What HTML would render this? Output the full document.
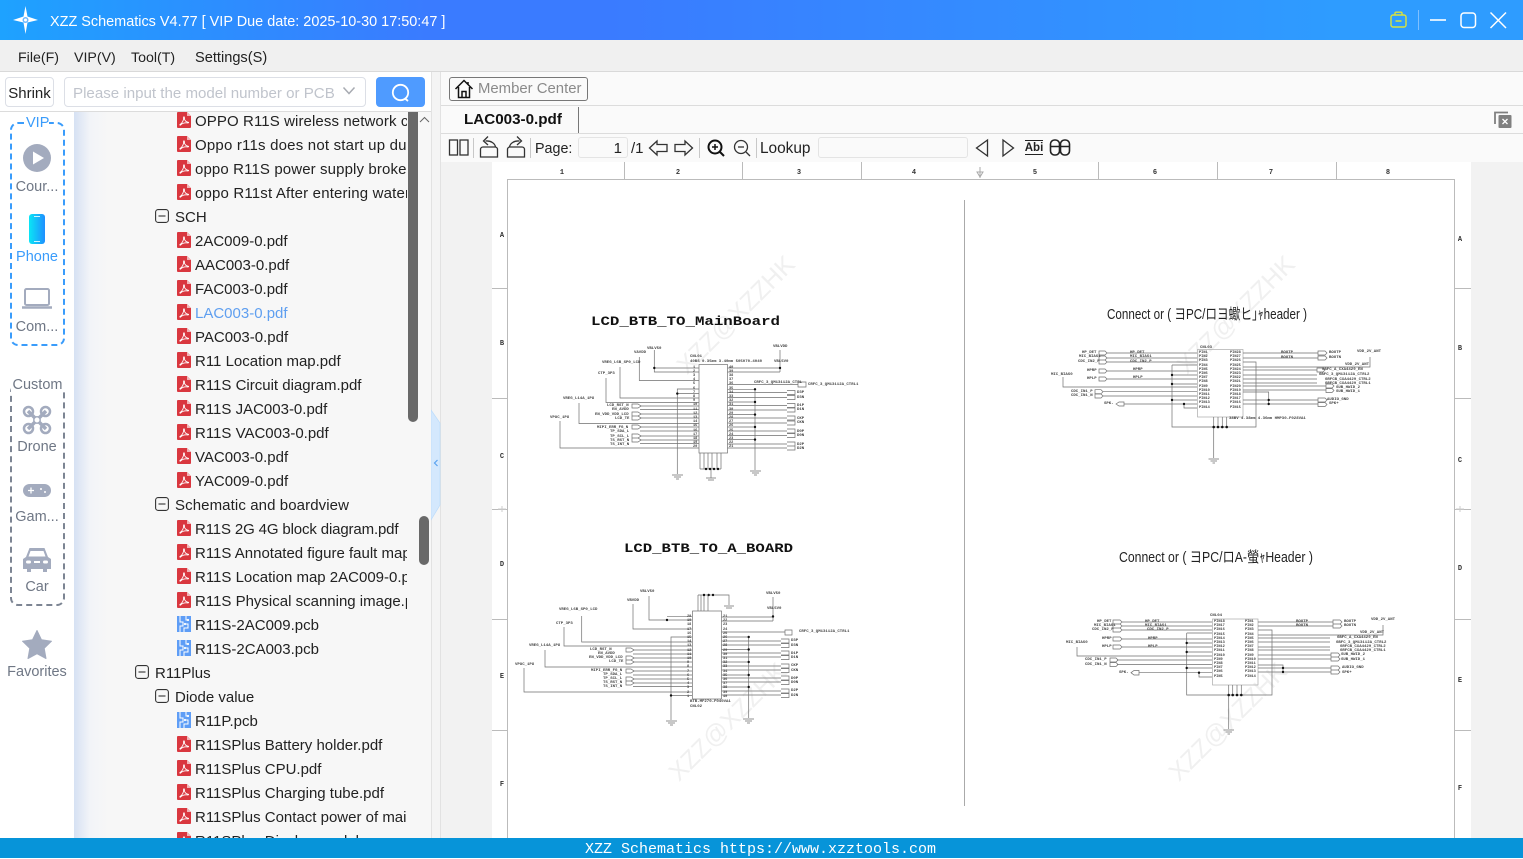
<!DOCTYPE html>
<html><head><meta charset="utf-8"><title>XZZ Schematics</title>
<style>
*{box-sizing:border-box}
html,body{margin:0;padding:0;width:1523px;height:858px;overflow:hidden;background:#fff;font-family:"Liberation Sans","Noto Sans CJK SC",sans-serif;color:#222}
.a{position:absolute;white-space:nowrap}
#tree{position:absolute;left:74px;top:112px;width:333px;height:726px;overflow:hidden}
.r{position:absolute;font-size:15px;line-height:28px;height:24px;white-space:nowrap;color:#222}
.r svg{position:absolute}
.f{left:121px}
.t{left:101px}
.l{left:81px}
.side{position:absolute;left:0;width:74px;text-align:center;font-size:14.5px;color:#6f7785;line-height:20px}
.pn{position:absolute;font:bold 3.6px/4.2px "Liberation Mono",monospace;color:#444;white-space:pre}
.sl{position:absolute;font:bold 4px/4px "Liberation Mono",monospace;color:#444;white-space:nowrap}
.wm{position:absolute;font:25px/28px "Liberation Sans",sans-serif;color:#f0f0f0;transform:translate(-50%,-50%) rotate(-45deg);white-space:nowrap}
</style></head><body>
<svg width="0" height="0" style="position:absolute"><defs>
<symbol id="pdf" viewBox="0 0 14 16"><path d="M1 0H10L14 4V15a1 1 0 0 1-1 1H1a1 1 0 0 1-1-1V1a1 1 0 0 1 1-1z" fill="#d9373f"/><path d="M10 0L14 4H10z" fill="#f2b5b8"/><path d="M3 12.5C5 11.5 7 8 6.6 5.5 6.4 4.5 7.6 4.5 7.4 6 7.2 8 9 10 11 10.2 12 10.3 11.6 11 10.6 10.9 8.5 10.6 5.5 11 3.6 13 3 13.4 2.6 13 3 12.5z" fill="none" stroke="#fff" stroke-width=".9"/></symbol>
<symbol id="pcb" viewBox="0 0 14 16"><rect width="14" height="16" fill="#5e9df6"/><path d="M3 0V6H6V10H3V16M9 0V4H11M7 16V12H11V8H8" fill="none" stroke="#fff" stroke-width="1"/><circle cx="11" cy="4" r="1.1" fill="#fff"/><circle cx="8" cy="8" r="1.1" fill="#fff"/></symbol>
<symbol id="box" viewBox="0 0 14 14"><rect x=".6" y=".6" width="12.8" height="12.8" rx="2.5" fill="none" stroke="#333" stroke-width="1.1"/><path d="M3.5 7H10.5" stroke="#333" stroke-width="1.1"/></symbol>
</defs></svg>

<!-- title bar -->
<div class="a" style="left:0;top:0;width:1523px;height:40px;background:linear-gradient(90deg,#1ea2ff 0,#3a7bff 28%,#3a7bff 40%,#2e9cff 88%,#2e9cff 100%)"></div>
<svg class="a" style="left:12px;top:6px" width="27" height="28" viewBox="0 0 27 28"><path d="M13.5 0L15.5 10.5 26 14 15.5 16.5 13.5 28 11.5 16.5 1 14 11.5 10.5z" fill="#fff"/><circle cx="13.5" cy="14" r="3" fill="#6db8ff"/><circle cx="13.5" cy="14" r="1.5" fill="#fff"/></svg>
<div class="a" style="left:50px;top:12px;font-size:14.45px;line-height:20px;color:#fff">XZZ Schematics V4.77 [ VIP Due date: 2025-10-30 17:50:47 ]</div>
<svg class="a" style="left:1388px;top:10px" width="125" height="22" viewBox="0 0 125 22"><g fill="none" stroke="#d9e33c" stroke-width="1.4"><rect x="3" y="5" width="15" height="12" rx="2"/><path d="M7 5V3.2a1 1 0 0 1 1-1H13a1 1 0 0 1 1 1V5M7.5 11H13.5"/></g><path d="M30.5 0V20" stroke="#7fc0ff"/><path d="M42 10H58" stroke="#fff" stroke-width="1.6"/><rect x="73" y="3" width="14.5" height="14.5" rx="3" fill="none" stroke="#fff" stroke-width="1.5"/><path d="M102.500 2.500L118 18M118 2.500L102.500 18" stroke="#fff" stroke-width="1.5"/></svg>

<!-- menu -->
<div class="a" style="left:0;top:40px;width:1523px;height:32px;background:#f0f0f0;border-bottom:1px solid #d9d9d9"></div>
<div class="a" style="left:18px;top:48px;font-size:14.2px;line-height:20px">File(F)</div>
<div class="a" style="left:74px;top:48px;font-size:14.2px;line-height:20px">VIP(V)</div>
<div class="a" style="left:131px;top:48px;font-size:14.2px;line-height:20px">Tool(T)</div>
<div class="a" style="left:195px;top:48px;font-size:14.6px;line-height:20px">Settings(S)</div>

<!-- left toolbar -->
<div class="a" style="left:0;top:72px;width:431px;height:40px;background:#fff;border-bottom:1px solid #dcdcdc"></div>
<div class="a" style="left:5px;top:77px;width:49px;height:30px;border:1px solid #dcdfe6;border-radius:4px;font-size:15px;line-height:31px;text-align:center;color:#222">Shrink</div>
<div class="a" style="left:64px;top:77px;width:302px;height:30px;border:1px solid #dcdfe6;border-radius:4px;font-size:15.1px;line-height:31px;color:#c0c4cc;padding-left:8px;background:#fff">Please input the model number or PCB</div>
<svg class="a" style="left:342px;top:86px" width="14" height="10"><path d="M1.500 1.500L7 7.500 12.500 1.500" fill="none" stroke="#a8abb2" stroke-width="1.5"/></svg>
<div class="a" style="left:376px;top:77px;width:49px;height:30px;border-radius:4px;background:#4f9bff"></div>
<svg class="a" style="left:390px;top:82px" width="22" height="21"><circle cx="10.500" cy="10.500" r="7.700" fill="none" stroke="#fff" stroke-width="1.800"/><path d="M15 16.500L18 19" stroke="#fff" stroke-width="1.800"/></svg>

<!-- sidebar -->
<div class="a" style="left:0;top:112px;width:74px;height:726px;background:#fff"></div>
<div class="a" style="left:10px;top:122px;width:55px;height:224px;border:2px dashed #3a9cfb;border-radius:8px"></div>
<div class="side" style="top:113px;left:26px;width:23px;background:#fff;color:#3a9cfb;font-size:14.5px;height:18px">VIP</div>
<svg class="a" style="left:23px;top:144px" width="28" height="28"><circle cx="14" cy="14" r="14" fill="#a3abbe"/><path d="M10 7.500L21 14 10 20.500z" fill="#fff"/></svg>
<div class="side" style="top:177px">Cour...</div>
<svg class="a" style="left:28px;top:214px" width="18" height="31"><defs><linearGradient id="ph" x1="0" x2="1"><stop offset="0" stop-color="#0ae6f5"/><stop offset="1" stop-color="#1f8fff"/></linearGradient></defs><rect x="1" y="0" width="16" height="30" rx="3" fill="url(#ph)"/><path d="M6 2.500H12M6 27.500H12" stroke="#cdf6ff" stroke-width="1"/></svg>
<div class="side" style="top:247px;color:#3a9cfb">Phone</div>
<svg class="a" style="left:22px;top:288px" width="30" height="22"><rect x="3" y="1" width="24" height="16" rx="1.500" fill="none" stroke="#a3abbe" stroke-width="2"/><path d="M0 19.500H30" stroke="#a3abbe" stroke-width="2.500"/></svg>
<div class="side" style="top:317px">Com...</div>

<div class="a" style="left:10px;top:384px;width:55px;height:222px;border:2px dashed #7d8593;border-radius:8px"></div>
<div class="side" style="top:375px;left:11px;width:53px;background:#fff;height:17px">Custom</div>
<svg class="a" style="left:22px;top:405px" width="30" height="30" viewBox="0 0 30 30"><g fill="none" stroke="#a3abbe"><path d="M6 6L24 24M24 6L6 24" stroke-width="3.500"/><circle cx="6.500" cy="6.500" r="4.500" stroke-width="2.500"/><circle cx="23.500" cy="6.500" r="4.500" stroke-width="2.500"/><circle cx="6.500" cy="23.500" r="4.500" stroke-width="2.500"/><circle cx="23.500" cy="23.500" r="4.500" stroke-width="2.500"/></g><circle cx="15" cy="15" r="3.200" fill="#fff" stroke="#a3abbe" stroke-width="1.500"/></svg>
<div class="side" style="top:437px">Drone</div>
<svg class="a" style="left:22px;top:483px" width="30" height="15"><rect x="1" y="1" width="28" height="13" rx="6.500" fill="#a3abbe"/><path d="M6 7.500H12M9 4.500V10.500" stroke="#fff" stroke-width="1.300"/><circle cx="19" cy="6" r="1" fill="#fff"/><circle cx="23" cy="9" r="1" fill="#fff"/></svg>
<div class="side" style="top:507px">Gam...</div>
<svg class="a" style="left:22px;top:547px" width="30" height="26" viewBox="0 0 30 26"><path d="M7.500 1H22.500L26 10 29 12V22H25V25H21V22H9V25H5V22H1V12L4 10z" fill="#a3abbe"/><path d="M8.500 4H21.500L23.500 9.500H6.500z" fill="#fff"/><rect x="4" y="13.500" width="5" height="3" rx="1.500" fill="#fff"/><rect x="21" y="13.500" width="5" height="3" rx="1.500" fill="#fff"/><rect x="12" y="14" width="6" height="2" fill="#fff"/></svg>
<div class="side" style="top:577px">Car</div>
<svg class="a" style="left:22px;top:630px" width="30" height="29" viewBox="0 0 30 29"><path d="M15 .5L19.500 9.800 29.500 11.200 22.200 18.300 24 28.500 15 23.700 6 28.500 7.800 18.300 .5 11.200 10.500 9.800z" fill="#a3abbe" stroke="#a3abbe" stroke-linejoin="round"/></svg>
<div class="side" style="top:662px">Favorites</div>

<!-- tree background -->
<div class="a" style="left:74px;top:112px;width:358px;height:726px;background:linear-gradient(90deg,#d6e1f3 0,#f2f4f8 16px,#f7f7f7 34px,#f7f7f7 100%)"></div>
<div id="tree">
<div class="r f" style="top:-4px;letter-spacing:.1px"><svg style="left:-18px;top:4px" width="14" height="16"><use href="#pdf"/></svg>OPPO R11S wireless network card</div>
<div class="r f" style="top:20px;letter-spacing:.2px"><svg style="left:-18px;top:4px" width="14" height="16"><use href="#pdf"/></svg>Oppo r11s does not start up due</div>
<div class="r f" style="top:44px;letter-spacing:.12px"><svg style="left:-18px;top:4px" width="14" height="16"><use href="#pdf"/></svg>oppo R11S power supply broken</div>
<div class="r f" style="top:68px;letter-spacing:.17px"><svg style="left:-18px;top:4px" width="14" height="16"><use href="#pdf"/></svg>oppo R11st After entering water</div>
<div class="r t" style="top:92px"><svg style="left:-20px;top:5px" width="14" height="14"><use href="#box"/></svg>SCH</div>
<div class="r f" style="top:116px"><svg style="left:-18px;top:4px" width="14" height="16"><use href="#pdf"/></svg>2AC009-0.pdf</div>
<div class="r f" style="top:140px"><svg style="left:-18px;top:4px" width="14" height="16"><use href="#pdf"/></svg>AAC003-0.pdf</div>
<div class="r f" style="top:164px"><svg style="left:-18px;top:4px" width="14" height="16"><use href="#pdf"/></svg>FAC003-0.pdf</div>
<div class="r f" style="top:188px;color:#5f9ff0"><svg style="left:-18px;top:4px" width="14" height="16"><use href="#pdf"/></svg>LAC003-0.pdf</div>
<div class="r f" style="top:212px"><svg style="left:-18px;top:4px" width="14" height="16"><use href="#pdf"/></svg>PAC003-0.pdf</div>
<div class="r f" style="top:236px"><svg style="left:-18px;top:4px" width="14" height="16"><use href="#pdf"/></svg>R11 Location map.pdf</div>
<div class="r f" style="top:260px"><svg style="left:-18px;top:4px" width="14" height="16"><use href="#pdf"/></svg>R11S Circuit diagram.pdf</div>
<div class="r f" style="top:284px"><svg style="left:-18px;top:4px" width="14" height="16"><use href="#pdf"/></svg>R11S JAC003-0.pdf</div>
<div class="r f" style="top:308px"><svg style="left:-18px;top:4px" width="14" height="16"><use href="#pdf"/></svg>R11S VAC003-0.pdf</div>
<div class="r f" style="top:332px"><svg style="left:-18px;top:4px" width="14" height="16"><use href="#pdf"/></svg>VAC003-0.pdf</div>
<div class="r f" style="top:356px"><svg style="left:-18px;top:4px" width="14" height="16"><use href="#pdf"/></svg>YAC009-0.pdf</div>
<div class="r t" style="top:380px;letter-spacing:.1px"><svg style="left:-20px;top:5px" width="14" height="14"><use href="#box"/></svg>Schematic and boardview</div>
<div class="r f" style="top:404px;letter-spacing:-.14px"><svg style="left:-18px;top:4px" width="14" height="16"><use href="#pdf"/></svg>R11S 2G 4G block diagram.pdf</div>
<div class="r f" style="top:428px"><svg style="left:-18px;top:4px" width="14" height="16"><use href="#pdf"/></svg>R11S Annotated figure fault map</div>
<div class="r f" style="top:452px"><svg style="left:-18px;top:4px" width="14" height="16"><use href="#pdf"/></svg>R11S Location map 2AC009-0.pdf</div>
<div class="r f" style="top:476px"><svg style="left:-18px;top:4px" width="14" height="16"><use href="#pdf"/></svg>R11S Physical scanning image.pdf</div>
<div class="r f" style="top:500px"><svg style="left:-18px;top:4px" width="14" height="16"><use href="#pcb"/></svg>R11S-2AC009.pcb</div>
<div class="r f" style="top:524px"><svg style="left:-18px;top:4px" width="14" height="16"><use href="#pcb"/></svg>R11S-2CA003.pcb</div>
<div class="r l" style="top:548px"><svg style="left:-20px;top:5px" width="14" height="14"><use href="#box"/></svg>R11Plus</div>
<div class="r t" style="top:572px"><svg style="left:-20px;top:5px" width="14" height="14"><use href="#box"/></svg>Diode value</div>
<div class="r f" style="top:596px"><svg style="left:-18px;top:4px" width="14" height="16"><use href="#pcb"/></svg>R11P.pcb</div>
<div class="r f" style="top:620px"><svg style="left:-18px;top:4px" width="14" height="16"><use href="#pdf"/></svg>R11SPlus Battery holder.pdf</div>
<div class="r f" style="top:644px"><svg style="left:-18px;top:4px" width="14" height="16"><use href="#pdf"/></svg>R11SPlus CPU.pdf</div>
<div class="r f" style="top:668px"><svg style="left:-18px;top:4px" width="14" height="16"><use href="#pdf"/></svg>R11SPlus Charging tube.pdf</div>
<div class="r f" style="top:692px"><svg style="left:-18px;top:4px" width="14" height="16"><use href="#pdf"/></svg>R11SPlus Contact power of main</div>
<div class="r f" style="top:716px"><svg style="left:-18px;top:4px" width="14" height="16"><use href="#pdf"/></svg>R11SPlus Display module</div>
</div>
<div class="a" style="left:408px;top:112px;width:10px;height:310px;background:#696969;border-radius:0 0 5px 5px"></div>
<svg class="a" style="left:418px;top:115px" width="13" height="10"><path d="M2 7L6.500 2.500 11 7" fill="none" stroke="#666" stroke-width="1"/></svg>
<div class="a" style="left:419px;top:516px;width:10px;height:49px;background:#696969;border-radius:5px"></div>

<!-- splitter -->
<div class="a" style="left:431px;top:72px;width:10px;height:766px;background:#f4f4f4;border-left:1px solid #e2e2e2;border-right:1px solid #e2e2e2"></div>
<svg class="a" style="left:431px;top:408px" width="10" height="114"><path d="M0 2L9 15V97L0 112z" fill="#d4e8fd" stroke="#bcdcfb" stroke-width=".7"/><path d="M6.500 52L3.500 55 6.500 58" fill="none" stroke="#5aa2f0" stroke-width="1.200"/></svg>

<!-- right top bars -->
<div class="a" style="left:441px;top:72px;width:1082px;height:34px;background:#fafafa;border-bottom:1px solid #dcdcdc"></div>
<div class="a" style="left:449px;top:77px;width:139px;height:24px;border:1px solid #777;border-radius:3px;font-size:14.9px;line-height:23px;color:#8a8a8a;padding-left:28px">Member Center</div>
<svg class="a" style="left:454px;top:79px" width="20" height="20" viewBox="0 0 20 20"><path d="M1.500 10L10 1.500 18.500 10M4.500 8V18.500H15.500V8M8 18.500V12.500H12V18.500M14 3V6" fill="none" stroke="#111" stroke-width="1.500"/></svg>
<div class="a" style="left:441px;top:106px;width:1082px;height:28px;background:#fafafa;border-bottom:1px solid #dcdcdc"></div>
<div class="a" style="left:464px;top:110px;font-size:15.2px;font-weight:bold;line-height:20px;color:#111">LAC003-0.pdf</div>
<div class="a" style="left:578px;top:107px;width:1px;height:26px;background:#777"></div>
<svg class="a" style="left:1494px;top:110px" width="19" height="19" viewBox="0 0 19 19"><path d="M1 14V2.500H14" fill="none" stroke="#808080" stroke-width="1.800"/><rect x="4.500" y="5" width="13" height="13" rx="1" fill="#808080"/><path d="M8.500 9L13.500 14M13.500 9L8.500 14" stroke="#fff" stroke-width="1.300"/></svg>

<!-- pdf toolbar -->
<div class="a" style="left:441px;top:134px;width:1082px;height:28px;background:#fafafa"></div>
<svg class="a" style="left:441px;top:134px" width="640" height="28" viewBox="0 0 640 28">
<g fill="none" stroke="#333" stroke-width="1.300">
<rect x="8.500" y="6" width="8" height="15"/><rect x="19" y="6" width="8" height="15"/>
<path d="M39.500 23V15.500a2.500 2.500 0 0 1 2.500-2.500H54a2.500 2.500 0 0 1 2.500 2.500V23H39.500z"/>
<path d="M54.500 13C54 9.500 50 6.500 44.500 7"/><path d="M47 2.500L42.500 7 47 11"/>
<path d="M66.500 23V15.500a2.500 2.500 0 0 1 2.500-2.500H81a2.500 2.500 0 0 1 2.500 2.500V23H66.500z"/>
<path d="M68.500 13C69 9.500 73 6.500 78.500 7"/><path d="M76 2.500L80.500 7 76 11"/>
<path d="M208.500 14L216 7V10.500H226V17.500H216V21z"/>
<path d="M251.500 14L244 7V10.500H234V17.500H244V21z"/>
<path d="M546.500 6L535.500 14 546.500 22z"/>
<path d="M562 6L572.500 14 562 22z"/>
</g>
<g fill="none" stroke="#111" stroke-width="2"><circle cx="274" cy="13" r="6.500"/><path d="M279 18L283 22"/><path d="M271 13H277M274 10V16" stroke-width="1.500"/></g>
<g fill="none" stroke="#333" stroke-width="1.300"><circle cx="300" cy="13" r="6.500"/><path d="M305 18L309 22"/><path d="M297 13H303"/></g>
<g fill="none" stroke="#222" stroke-width="1.600"><rect x="609.500" y="6" width="9" height="15" rx="4"/><rect x="619.500" y="6" width="9" height="15" rx="4"/><path d="M609.500 12.500H628.500"/></g>
<path d="M32.500 4V24M89.500 4V24M258.500 4V24M315.500 4V24" stroke="#c8c8c8"/>
<path d="M584 6.500H602M584 20.500H602" stroke="#222" stroke-width="1"/>
</svg>
<div class="a" style="left:1024px;top:141px;width:20px;font:bold 11.5px/14px 'Liberation Sans',sans-serif;color:#222;text-align:center">Abi</div>
<div class="a" style="left:535px;top:139px;font-size:14.3px;line-height:20px">Page:</div>
<div class="a" style="left:578px;top:137px;width:50px;height:21px;border:1px solid #e4e4e4;border-radius:3px;background:#fafafa;font-size:15px;line-height:21px;text-align:right;padding-right:5px">1</div>
<div class="a" style="left:631px;top:139px;font-size:15px;line-height:20px">/1</div>
<div class="a" style="left:760px;top:139px;font-size:15.4px;line-height:20px">Lookup</div>
<div class="a" style="left:818px;top:137px;width:150px;height:21px;border:1px solid #e4e4e4;border-radius:3px;background:#fafafa"></div>

<!-- canvas -->
<div class="a" style="left:441px;top:162px;width:1082px;height:676px;background:#f2f2f2"></div>
<div class="a" style="left:492px;top:162px;width:979px;height:676px;background:#fff"></div>

<!-- watermarks -->
<div class="wm" style="left:736px;top:315px">XZZ@XZZHK</div>
<div class="wm" style="left:1236px;top:315px">XZZ@XZZHK</div>
<div class="wm" style="left:728px;top:722px">XZZ@XZZHK</div>
<div class="wm" style="left:1228px;top:722px">XZZ@XZZHK</div>

<!-- drawing -->
<svg class="a" style="left:0;top:0" width="1523" height="858" viewBox="0 0 1523 858">
<g fill="none" stroke="#bbb" stroke-width="1">
<path d="M507.500 838V179.500H1454.500V838"/>
<path d="M624.500 162V179M742.500 162V179M861.500 162V179M1098.500 162V179M1217.500 162V179M1336.500 162V179"/>
<path d="M492 288.500H507M492 398.500H507M492 509.500H507M492 619.500H507M492 730.500H507"/>
<path d="M1455 288.500H1471M1455 398.500H1471M1455 509.500H1471M1455 619.500H1471M1455 730.500H1471"/>
<path d="M964.500 200V806" stroke="#aaa"/>
<path d="M980 167V178M977 172H983L980 177z" stroke="#aaa"/>
<path d="M498 509H506M1456 509H1464M502 506V512M1460 506V512" stroke="#ccc"/>
</g>
<g font-family="Liberation Mono,monospace" font-weight="bold" font-size="7" fill="#333" text-anchor="middle">
<text x="562" y="174">1</text><text x="678" y="174">2</text><text x="799" y="174">3</text><text x="914" y="174">4</text><text x="1035" y="174">5</text><text x="1155" y="174">6</text><text x="1271" y="174">7</text><text x="1388" y="174">8</text>
<text x="502" y="237">A</text><text x="502" y="345">B</text><text x="502" y="458">C</text><text x="502" y="566">D</text><text x="502" y="678">E</text><text x="502" y="786">F</text>
<text x="1460" y="241">A</text><text x="1460" y="350">B</text><text x="1460" y="462">C</text><text x="1460" y="570">D</text><text x="1460" y="682">E</text><text x="1460" y="790">F</text>
</g>
<g font-family="Liberation Mono,monospace" font-weight="bold" fill="#111">
<text x="591" y="325" font-size="13" textLength="189" lengthAdjust="spacingAndGlyphs">LCD_BTB_TO_MainBoard</text>
<text x="624" y="552" font-size="13" textLength="169" lengthAdjust="spacingAndGlyphs">LCD_BTB_TO_A_BOARD</text>
</g>
<g font-family="Liberation Sans,Noto Sans CJK SC,sans-serif" fill="#222" font-size="15">
<text x="1107" y="319" textLength="200" lengthAdjust="spacingAndGlyphs">Connect or ( ヨPC/ロヨ蠍ヒ｣ｬheader )</text>
<text x="1119" y="562" textLength="194" lengthAdjust="spacingAndGlyphs">Connect or ( ヨPC/ロA-螢ｬHeader )</text>
</g>

<g fill="none" stroke="#6f6f6f" stroke-width=".7">
<!-- S1 -->
<rect x="699" y="364.500" width="28.500" height="88.500"/>
<path d="M654.300 350V372H699M654.300 368H699M639.300 357V380.500H699M620 367V398H699M606 378V402.500H699M579 403V423.500H699M560 421V448H699"/>
<path d="M640 406H699M640 409.500H699M640 414H699M640 418H699M640 427H699M640 431H699M640 436H699M640 440H699M640 443.500H699"/>
<path d="M632 404H638L641 406 638 408H632zM632 412H638L641 414 638 416H632zM632 416H638L641 418 638 420H632zM632 425H638L641 427 638 429H632zM632 434H638L641 436 638 438H632zM632 438H638L641 440 638 442H632z"/>
<path d="M677.300 474V389H699M677.300 393.600H699M672 475H683M674 477H681M676 479H679"/>
<path d="M727.500 368H780M727.500 372H780M780 350V372"/>
<path d="M727.500 384.500H798M798 382H806V387H798z"/>
<path d="M727.500 389.300H755M727.500 402H755M727.500 414.600H755M727.500 427H755M727.500 439.600H755M755 389V470M750 471H761M752 473H759M754 475H757"/>
<path d="M727.500 392.500H787M727.500 397.500H787M727.500 405.500H787M727.500 410H787M727.500 418H787M727.500 423H787M727.500 431H787M727.500 435.500H787M727.500 444H787M727.500 448H787"/>
<path d="M787 390.500H795V394.500H787M787 395.500H795V399.500H787M787 403.500H795V407.500H787M787 408H795V412H787M787 416H795V420H787M787 421H795V425H787M787 429H795V433H787M787 433.500H795V437.500H787M787 442H795V446H787M787 446H795V450H787"/>
<path d="M700 453V469M704 453V469M708 453V469M712 453V469M717 453V469M721 453V469M700 469H721M711 469V478M706 478H716M708 480H714"/>
<!-- S2 -->
<rect x="692.500" y="611" width="29" height="88"/>
<path d="M649 596V620H692M667 616.700H692M633 604V629H692M581.700 616V642H692M564 627V646H692M545 650V667H692M524 668V692H692"/>
<path d="M633 650H692M633 654H692M633 658H692M633 662H692M633 671H692M633 675H692M633 679H692M633 683H692M633 686.500H692"/>
<path d="M626 648H631L634 650 631 652H626zM626 656H631L634 658 631 660H626zM626 660H631L634 662 631 664H626zM626 669H631L634 671 631 673H626zM626 677H631L634 679 631 681H626zM626 681H631L634 683 631 685H626z"/>
<path d="M671 720V637H692M671 695.500H692M666 721H677M668 723H675M670 725H673"/>
<path d="M698 595V611M701 595V611M704 595V611M708 595V611M698 595H729V605M724 606H734M726 608H732"/>
<path d="M721.500 617H773M721.500 621H773M773 597V621M721.500 632H785M785 630H792V635H785z"/>
<path d="M721.500 637H748.700M721.500 649.500H748.700M721.500 662H748.700M721.500 675H748.700M721.500 687H748.700M748.700 637V718M743 719H754M745 721H752M747 723H750"/>
<path d="M721.500 641H781M721.500 645H781M721.500 653H781M721.500 657H781M721.500 666H781M721.500 670H781M721.500 678H781M721.500 682H781M721.500 691H781M721.500 695H781"/>
<path d="M781 639H789V643H781M781 643.500H789V647.500H781M781 651H789V655H781M781 655.500H789V659.500H781M781 664H789V668H781M781 668.500H789V672.500H781M781 676H789V680H781M781 680.500H789V684.500H781M781 689H789V693H781M781 693.500H789V697.500H781"/>
<!-- S3 -->
<rect x="1197.500" y="349.500" width="45.500" height="67.500" stroke="#aaa"/>
<path d="M1107 353H1197M1107 358H1197M1107 362H1197M1107 371H1197M1107 379H1197M1103 391.700H1197M1103 396H1197M1124 404H1197M1063 377V387H1197"/>
<path d="M1099 351H1105L1107 353 1105 355H1099zM1099 356H1105L1107 358 1105 360H1099zM1099 360H1105L1107 362 1105 364H1099zM1099 369H1105L1107 371 1105 373H1099zM1099 377H1105L1107 379 1105 381H1099zM1095 389.700H1101L1103 391.700 1101 393.700H1095zM1095 394H1101L1103 396 1101 398H1095zM1116 404L1119 402H1124V406H1119z"/>
<path d="M1172 365V427H1256V362H1243M1172 365H1197M1172 375H1197M1172 384H1197M1172 400H1197M1184 404V408H1197"/>
<path d="M1213.700 417V458M1218 417V427M1222.300 417V427M1226.700 417V427M1208.500 459H1219M1210.500 461H1217M1212.500 463H1215"/>
<path d="M1243 353H1318M1243 358H1318M1243 367H1370V357M1243 370H1317M1243 375H1317M1243 379H1317M1243 383H1317M1243 386H1326M1243 390H1326M1243 392H1268.700V404M1243 400H1318M1243 404H1318"/>
<path d="M1318 351H1325L1327 353 1325 355H1318zM1318 356H1325L1327 358 1325 360H1318zM1317 368H1323L1325 370 1323 372H1317zM1326 384H1332L1334 386 1332 388H1326zM1326 388.500H1332L1334 390.500 1332 392.500H1326zM1318 398H1325L1327 400 1325 402H1318zM1318 402.500H1325L1327 404.500 1325 406.500H1318z"/>
<!-- S4 -->
<rect x="1212.500" y="619" width="45.500" height="66" stroke="#aaa"/>
<path d="M1122 622H1212M1122 626H1212M1122 630H1212M1122 639H1212M1122 647H1212M1117 660H1212M1117 664.500H1212M1139 672.700H1212M1077 647V656H1212"/>
<path d="M1113 620H1120L1122 622 1120 624H1113zM1113 624H1120L1122 626 1120 628H1113zM1113 628H1120L1122 630 1120 632H1113zM1113 637H1120L1122 639 1120 641H1113zM1113 645H1120L1122 647 1120 649H1113zM1110 658H1116L1118 660 1116 662H1110zM1110 662.500H1116L1118 664.500 1116 666.500H1110zM1131 672.700L1134 670.500H1139V675H1134z"/>
<path d="M1186.700 633V695H1272V630H1258M1186.700 633H1212M1186.700 643H1212M1186.700 652H1212M1186.700 668H1212M1199 672.700V677H1212"/>
<path d="M1228.700 685V729M1232.700 685V695M1237 685V695M1241.300 685V695M1223.500 730H1234M1225.500 732H1232M1227.500 734H1230"/>
<path d="M1258 622H1333M1258 626H1333M1258 635H1383V625M1258 638H1330M1258 642H1330M1258 647H1330M1258 650H1330M1258 655H1331M1258 659H1331M1258 665H1283V672M1258 668H1331M1258 672H1331"/>
<path d="M1333 620H1340L1342 622 1340 624H1333zM1333 624H1340L1342 626 1340 628H1333zM1331 653H1338L1340 655 1338 657H1331zM1331 657H1338L1340 659 1338 661H1331zM1331 666H1338L1340 668 1338 670H1331zM1331 670H1338L1340 672 1338 674H1331z"/>
</g>
<g fill="#111">
<circle cx="654.300" cy="368" r="1.200"/><circle cx="677.300" cy="393.600" r="1.200"/><circle cx="780" cy="368" r="1.200"/><circle cx="755" cy="389.300" r="1.200"/><circle cx="755" cy="402" r="1.200"/><circle cx="755" cy="414.600" r="1.200"/><circle cx="755" cy="427" r="1.200"/><circle cx="755" cy="439.600" r="1.200"/><circle cx="706" cy="469" r="1.200"/><circle cx="710" cy="469" r="1.200"/><circle cx="714" cy="469" r="1.200"/><circle cx="718" cy="469" r="1.200"/>
<circle cx="667" cy="620" r="1.200"/><circle cx="671" cy="695.500" r="1.200"/><circle cx="704" cy="595" r="1.200"/><circle cx="708.700" cy="595" r="1.200"/><circle cx="713" cy="595" r="1.200"/><circle cx="773" cy="616.500" r="1.200"/><circle cx="748.700" cy="637" r="1.200"/><circle cx="748.700" cy="649.500" r="1.200"/><circle cx="748.700" cy="662" r="1.200"/><circle cx="748.700" cy="675" r="1.200"/><circle cx="748.700" cy="687" r="1.200"/>
<circle cx="1172" cy="375" r="1.200"/><circle cx="1172" cy="384" r="1.200"/><circle cx="1172" cy="400" r="1.200"/><circle cx="1184" cy="404" r="1.200"/><circle cx="1213.700" cy="427" r="1.300"/><circle cx="1218" cy="427" r="1.300"/><circle cx="1222.300" cy="427" r="1.300"/><circle cx="1226.700" cy="427" r="1.300"/><circle cx="1268.700" cy="400" r="1.200"/><circle cx="1268.700" cy="404" r="1.200"/>
<circle cx="1186.700" cy="643" r="1.200"/><circle cx="1186.700" cy="652" r="1.200"/><circle cx="1186.700" cy="668" r="1.200"/><circle cx="1199" cy="672.700" r="1.200"/><circle cx="1228.700" cy="695" r="1.300"/><circle cx="1232.700" cy="695" r="1.300"/><circle cx="1237" cy="695" r="1.300"/><circle cx="1241.300" cy="695" r="1.300"/><circle cx="1283" cy="668" r="1.200"/><circle cx="1283" cy="672" r="1.200"/>
</g>
</svg>

<!-- pin numbers -->
<div class="pn" style="left:693px;top:365.500px">1
2
3
4
5
6
7
8
9
10
11
12
13
14
15
16
17
18
19
20</div>
<div class="pn" style="left:729px;top:365.500px">40
39
38
37
36
35
34
33
32
31
30
29
28
27
26
25
24
23
22
21</div>
<div class="pn" style="left:687px;top:615px">20
19
18
17
16
15
14
13
12
11
10
9
8
7
6
5
4
3
2
1</div>
<div class="pn" style="left:723px;top:615px">21
22
23
24
25
26
27
28
29
30
31
32
33
34
35
36
37
38
39
40</div>
<div class="pn" style="left:1199px;top:351px">PIN1
PIN2
PIN3
PIN4
PIN5
PIN6
PIN7
PIN8
PIN9
PIN10
PIN11
PIN12
PIN13
PIN14</div>
<div class="pn" style="left:1230px;top:351px">PIN28
PIN27
PIN26
PIN25
PIN24
PIN23
PIN22
PIN21
PIN20
PIN19
PIN18
PIN17
PIN16
PIN15</div>
<div class="pn" style="left:1214px;top:620px">PIN18
PIN17
PIN16
PIN15
PIN14
PIN13
PIN12
PIN11
PIN10
PIN9
PIN8
PIN7
PIN6
PIN5</div>
<div class="pn" style="left:1245px;top:620px">PIN1
PIN2
PIN3
PIN4
PIN5
PIN6
PIN7
PIN8
PIN9
PIN10
PIN11
PIN12
PIN13
PIN14</div>

<!-- schematic labels -->
<div class="sl" style="left:647px;top:347px">VBLV50</div>
<div class="sl" style="left:634px;top:351px">VAVDD</div>
<div class="sl" style="left:602px;top:361px">VREG_L6B_SP0_LCD</div>
<div class="sl" style="left:598px;top:372px">CTP_3P3</div>
<div class="sl" style="left:563px;top:397px">VREG_L14A_1P8</div>
<div class="sl" style="left:550px;top:416px">VPOC_1P8</div>
<div class="sl" style="left:690px;top:355px">CNL01</div>
<div class="sl" style="left:690px;top:360px">40BS 0.35mm 3.40mm 505070-4040</div>
<div class="sl" style="left:773px;top:345px">VBLVDD</div>
<div class="sl" style="left:774px;top:360px">VBL5V0</div>
<div class="sl" style="left:808px;top:383px">CRFC_3_QM13112A_CTRL1</div>
<div class="sl" style="left:754px;top:381px">CRFC_3_QM13112A_CTRL</div>
<div class="sl" style="left:607px;top:404px">LCD_RST_N</div>
<div class="sl" style="left:612px;top:408px">EN_AVDD</div>
<div class="sl" style="left:595px;top:413px">EN_VDD_VDD_LCD</div>
<div class="sl" style="left:615px;top:417px">LCD_TE</div>
<div class="sl" style="left:597px;top:426px">MIPI_ERR_FG_N</div>
<div class="sl" style="left:610px;top:430px">TP_SDA_L</div>
<div class="sl" style="left:610px;top:435px">TP_SCL_L</div>
<div class="sl" style="left:610px;top:439px">TS_RST_N</div>
<div class="sl" style="left:610px;top:443px">TS_INT_N</div>
<div class="sl" style="left:797px;top:391px">D3P</div><div class="sl" style="left:797px;top:396px">D3N</div>
<div class="sl" style="left:797px;top:404px">D1P</div><div class="sl" style="left:797px;top:408px">D1N</div>
<div class="sl" style="left:797px;top:417px">CKP</div><div class="sl" style="left:797px;top:421px">CKN</div>
<div class="sl" style="left:797px;top:430px">D0P</div><div class="sl" style="left:797px;top:434px">D0N</div>
<div class="sl" style="left:797px;top:443px">D2P</div><div class="sl" style="left:797px;top:447px">D2N</div>
<div class="sl" style="left:640px;top:590px">VBLV50</div>
<div class="sl" style="left:627px;top:599px">VBVDD</div>
<div class="sl" style="left:559px;top:608px">VREG_L6B_SP0_LCD</div>
<div class="sl" style="left:556px;top:622px">CTP_3P3</div>
<div class="sl" style="left:529px;top:644px">VREG_L14A_1P8</div>
<div class="sl" style="left:515px;top:663px">VPOC_1P8</div>
<div class="sl" style="left:690px;top:700px">BTB-MF270-F040VA1</div>
<div class="sl" style="left:690px;top:705px">CNL02</div>
<div class="sl" style="left:766px;top:592px">VBLV50</div>
<div class="sl" style="left:767px;top:607px">VBL5V0</div>
<div class="sl" style="left:799px;top:630px">CRFC_3_QM13112A_CTRL1</div>
<div class="sl" style="left:590px;top:648px">LCD_RST_N</div>
<div class="sl" style="left:598px;top:652px">EN_AVDD</div>
<div class="sl" style="left:589px;top:656px">EN_VDD_VDD_LCD</div>
<div class="sl" style="left:609px;top:660px">LCD_TE</div>
<div class="sl" style="left:591px;top:669px">MIPI_ERR_FG_N</div>
<div class="sl" style="left:603px;top:673px">TP_SDA_L</div>
<div class="sl" style="left:603px;top:677px">TP_SCL_L</div>
<div class="sl" style="left:603px;top:681px">TS_RST_N</div>
<div class="sl" style="left:603px;top:685px">TS_INT_N</div>
<div class="sl" style="left:791px;top:639px">D3P</div><div class="sl" style="left:791px;top:644px">D3N</div>
<div class="sl" style="left:791px;top:652px">D1P</div><div class="sl" style="left:791px;top:656px">D1N</div>
<div class="sl" style="left:791px;top:664px">CKP</div><div class="sl" style="left:791px;top:669px">CKN</div>
<div class="sl" style="left:791px;top:677px">D0P</div><div class="sl" style="left:791px;top:681px">D0N</div>
<div class="sl" style="left:791px;top:689px">D2P</div><div class="sl" style="left:791px;top:694px">D2N</div>
<div class="sl" style="left:1082px;top:351px">HP_DET</div>
<div class="sl" style="left:1079px;top:355px">MIC_BIAS1</div>
<div class="sl" style="left:1078px;top:360px">CDC_IN2_P</div>
<div class="sl" style="left:1087px;top:369px">HPRP</div>
<div class="sl" style="left:1087px;top:377px">HPLP</div>
<div class="sl" style="left:1051px;top:373px">MIC_BIAS0</div>
<div class="sl" style="left:1071px;top:390px">CDC_IN1_P</div>
<div class="sl" style="left:1071px;top:394px">CDC_IN1_N</div>
<div class="sl" style="left:1104px;top:402px">SPK-</div>
<div class="sl" style="left:1130px;top:351px">HP_DET</div>
<div class="sl" style="left:1130px;top:355px">MIC_BIAS1</div>
<div class="sl" style="left:1130px;top:360px">CDC_IN2_P</div>
<div class="sl" style="left:1133px;top:368px">HPRP</div>
<div class="sl" style="left:1133px;top:376px">HPLP</div>
<div class="sl" style="left:1200px;top:346px">CNL03</div>
<div class="sl" style="left:1229px;top:417px">38BV 4.38mm 4.36mm HMP30-F028VA1</div>
<div class="sl" style="left:1281px;top:351px">BOUTP</div>
<div class="sl" style="left:1281px;top:356px">BOUTN</div>
<div class="sl" style="left:1329px;top:351px">BOUTP</div>
<div class="sl" style="left:1329px;top:356px">BOUTN</div>
<div class="sl" style="left:1357px;top:350px">VDD_2V_ANT</div>
<div class="sl" style="left:1345px;top:363px">VDD_2V_ANT</div>
<div class="sl" style="left:1322px;top:368px">GBFC_A_CXA4429_EN</div>
<div class="sl" style="left:1319px;top:373px">GBFC_3_QM13112A_CTRL2</div>
<div class="sl" style="left:1325px;top:378px">GRFCB_CXA4429_CTRL2</div>
<div class="sl" style="left:1325px;top:382px">GRFCB_CXA4429_CTRL1</div>
<div class="sl" style="left:1336px;top:386px">SUB_HWID_2</div>
<div class="sl" style="left:1336px;top:390px">SUB_HWID_1</div>
<div class="sl" style="left:1327px;top:398px">AUDIO_GND</div>
<div class="sl" style="left:1329px;top:402px">SPK+</div>
<div class="sl" style="left:1097px;top:620px">HP_DET</div>
<div class="sl" style="left:1094px;top:624px">MIC_BIAS1</div>
<div class="sl" style="left:1092px;top:628px">CDC_IN2_P</div>
<div class="sl" style="left:1102px;top:637px">HPRP</div>
<div class="sl" style="left:1102px;top:645px">HPLP</div>
<div class="sl" style="left:1066px;top:641px">MIC_BIAS0</div>
<div class="sl" style="left:1085px;top:658px">CDC_IN1_P</div>
<div class="sl" style="left:1085px;top:663px">CDC_IN1_N</div>
<div class="sl" style="left:1119px;top:671px">SPK-</div>
<div class="sl" style="left:1145px;top:620px">HP_DET</div>
<div class="sl" style="left:1145px;top:624px">MIC_BIAS1</div>
<div class="sl" style="left:1147px;top:628px">CDC_IN2_P</div>
<div class="sl" style="left:1148px;top:637px">HPRP</div>
<div class="sl" style="left:1148px;top:645px">HPLP</div>
<div class="sl" style="left:1210px;top:614px">CNL04</div>
<div class="sl" style="left:1296px;top:620px">BOUTP</div>
<div class="sl" style="left:1296px;top:624px">BOUTN</div>
<div class="sl" style="left:1344px;top:620px">BOUTP</div>
<div class="sl" style="left:1344px;top:624px">BOUTN</div>
<div class="sl" style="left:1371px;top:618px">VDD_2V_ANT</div>
<div class="sl" style="left:1360px;top:631px">VDD_2V_ANT</div>
<div class="sl" style="left:1337px;top:636px">GBFC_A_CXA4429_EN</div>
<div class="sl" style="left:1336px;top:641px">GBFC_3_QM13112A_CTRL2</div>
<div class="sl" style="left:1340px;top:645px">GRFCB_CXA4429_CTRL2</div>
<div class="sl" style="left:1340px;top:649px">GRFCB_CXA4429_CTRL1</div>
<div class="sl" style="left:1341px;top:653px">SUB_HWID_2</div>
<div class="sl" style="left:1341px;top:658px">SUB_HWID_1</div>
<div class="sl" style="left:1342px;top:666px">AUDIO_GND</div>
<div class="sl" style="left:1342px;top:671px">SPK+</div>

<!-- status bar -->
<div class="a" style="left:0;top:838px;width:1523px;height:20px;background:#0794d9"></div>
<div class="a" style="left:585px;top:840px;font:15px/19px 'Liberation Mono',monospace;color:#fff">XZZ Schematics https://www.xzztools.com</div>
</body></html>
